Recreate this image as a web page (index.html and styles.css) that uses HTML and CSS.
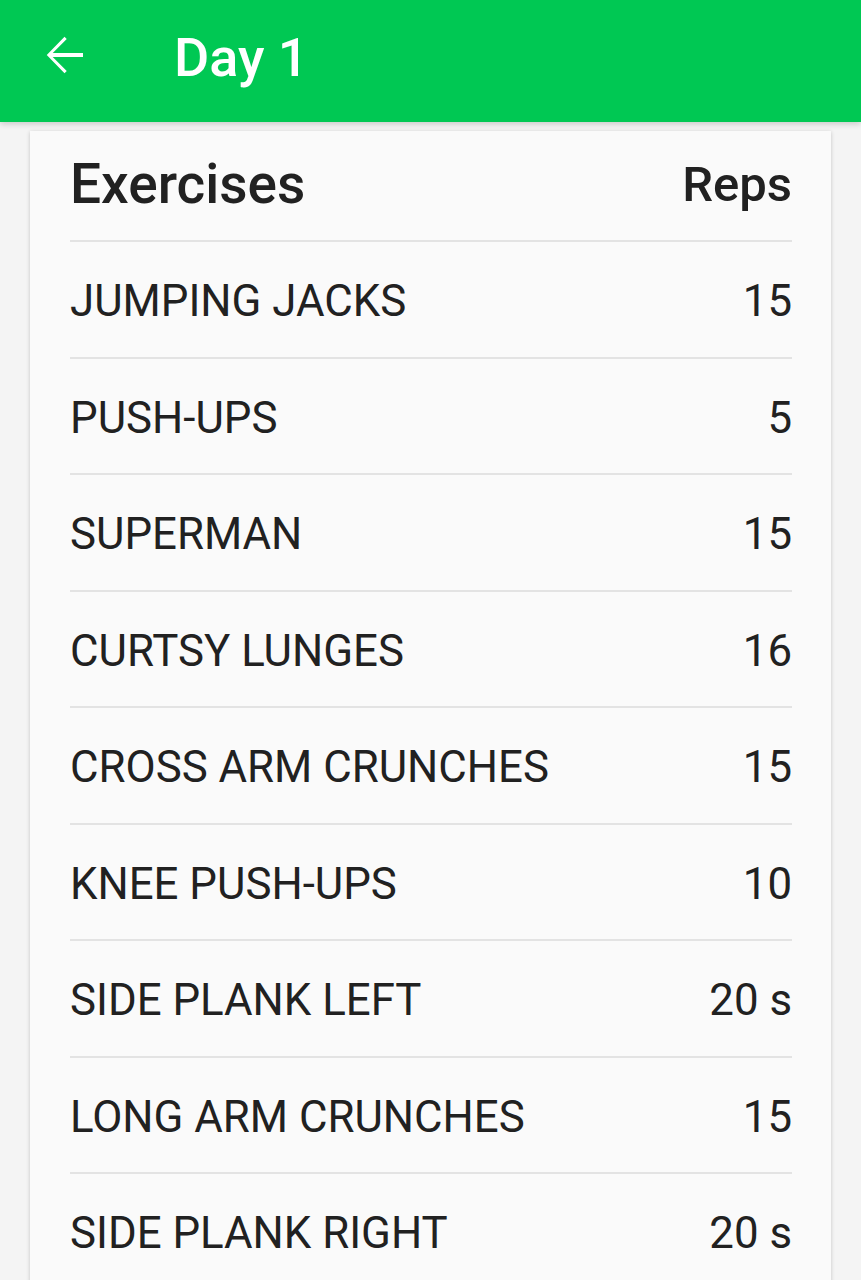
FILE: index.html
```html
<!DOCTYPE html>
<html lang="en">
<head>
<meta charset="utf-8">
<title>Day 1</title>
<link rel="stylesheet" href="styles.css">
</head>
<body>
<header class="appbar">
  <button class="back" aria-label="Back">
    <svg viewBox="0 0 24 24" width="60" height="60"><path fill="#fff" d="M20 11.2H7.9l5.6-5.6-.9-.9L5.5 12l7.1 7.3.9-.9-5.6-5.6H20z"/></svg>
  </button>
  <h1 class="title">Day 1</h1>
</header>
<main class="page">
  <section class="card">
    <div class="head">
      <span class="head-main">Exercises</span>
      <span class="head-reps">Reps</span>
    </div>
    <div class="row"><span>JUMPING JACKS</span><span>15</span></div>
    <div class="row"><span>PUSH-UPS</span><span>5</span></div>
    <div class="row"><span>SUPERMAN</span><span>15</span></div>
    <div class="row"><span>CURTSY LUNGES</span><span>16</span></div>
    <div class="row"><span>CROSS ARM CRUNCHES</span><span>15</span></div>
    <div class="row"><span>KNEE PUSH-UPS</span><span>10</span></div>
    <div class="row"><span>SIDE PLANK LEFT</span><span>20 s</span></div>
    <div class="row"><span>LONG ARM CRUNCHES</span><span>15</span></div>
    <div class="row"><span>SIDE PLANK RIGHT</span><span>20 s</span></div>
  </section>
</main>
</body>
</html>
```

FILE: styles.css
```css
* { box-sizing: border-box; }
html, body { margin: 0; padding: 0; }
body {
  background: #f4f4f4;
  font-family: Roboto, "Noto Sans", "Liberation Sans", sans-serif;
  color: #212121;
  height: 1280px;
  overflow: hidden;
}
.appbar {
  position: relative;
  z-index: 2;
  height: 122px;
  background: #00c853;
  display: flex;
  align-items: center;
  padding-left: 33px;
  box-shadow: 0 2px 6px rgba(0,0,0,0.18);
}
.back {
  width: 60px;
  height: 60px;
  padding: 0;
  border: 0;
  background: none;
  display: flex;
  margin-bottom: 12px;
}
.title {
  margin: 0 0 0 81px;
  color: #fff;
  font-size: 54px;
  font-weight: 500;
  line-height: 1;
  padding-bottom: 6px;
}
.page {
  padding: 9px 30px 0 30px;
}
.card {
  background: #fafafa;
  box-shadow: 0 1px 4px rgba(0,0,0,0.2);
  padding: 0 39px 0 40px;
  min-height: 1160px;
}
.head {
  height: 109px;
  display: flex;
  justify-content: space-between;
  align-items: baseline;
  font-weight: 500;
  padding-top: 21px;
}
.head-main {
  font-size: 55px;
}
.head-reps {
  font-size: 49px;
  position: relative;
  top: -2px;
}
.row {
  height: 116.5px;
  border-top: 2px solid #e3e3e3;
  display: flex;
  justify-content: space-between;
  align-items: center;
  font-size: 43.8px;
  font-weight: 400;
  padding-top: 4px;
}
```
